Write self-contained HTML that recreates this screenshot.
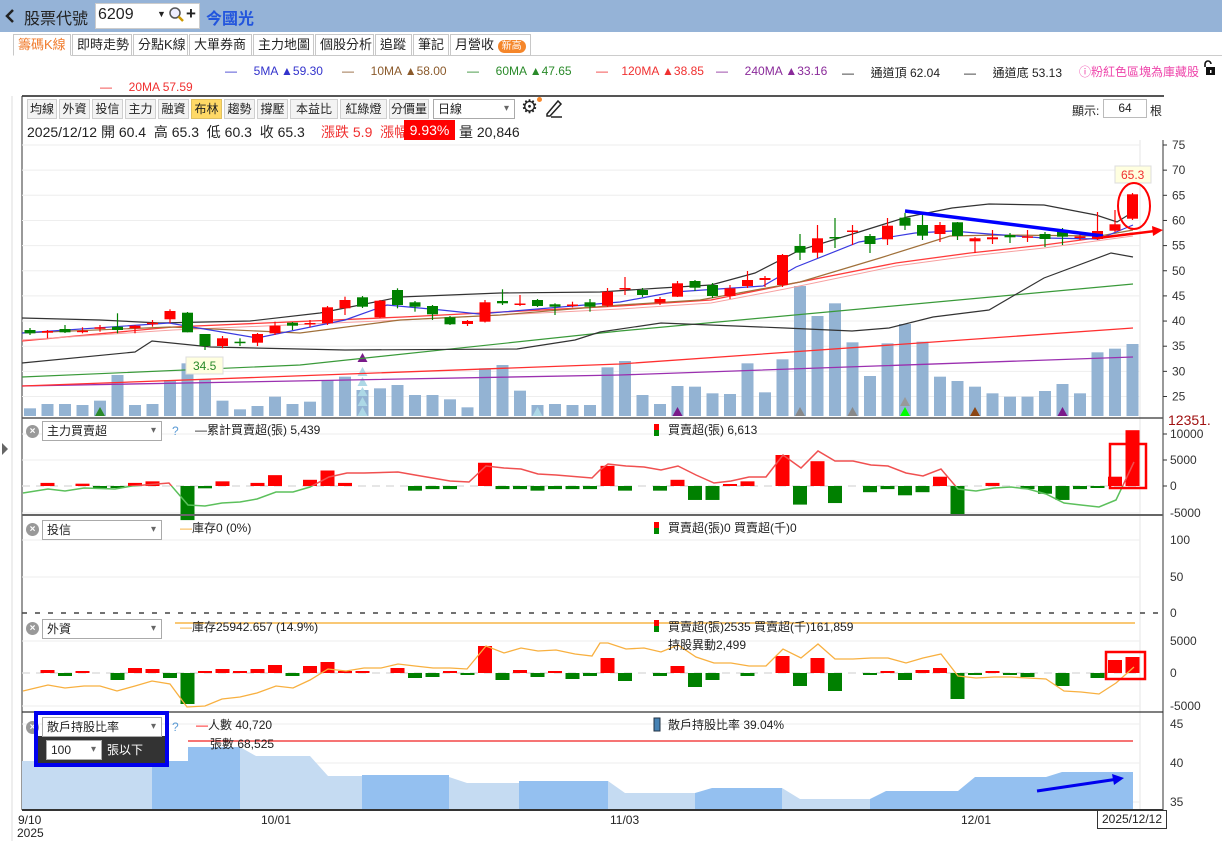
<!DOCTYPE html>
<html><head><meta charset="utf-8">
<style>
*{margin:0;padding:0;box-sizing:border-box}
body{width:1222px;height:841px;overflow:hidden;background:#fff;font-family:"Liberation Sans","Noto Sans CJK TC",sans-serif;font-size:12px;color:#222;position:relative}
.a{position:absolute;white-space:nowrap}
.hdr{left:0;top:0;width:1222px;height:32px;background:#95b3d7}
.tab{top:34px;height:22px;border:1px solid #c8c8c8;background:#fff;font-size:13px;line-height:20px;padding:0 4px;color:#222}
.tb{top:99px;height:20px;border:1px solid #cfcfcf;background:#f3f3f3;font-size:12px;line-height:18px;text-align:center}
.sel{height:20px;border:1px solid #aaa;background:#fff;font-size:12px;line-height:18px;padding-left:4px}
.sel:after{content:"▾";position:absolute;right:5px;top:0;font-size:10px;color:#666}
.xc{width:13px;height:13px;border-radius:50%;background:#999;color:#fff;font-size:10px;line-height:13px;text-align:center;font-weight:bold}
</style></head><body>
<div class="a hdr"></div>
<svg class="a" style="left:4px;top:8px" width="12" height="16"><path d="M9 2 L3 8 L9 14" fill="none" stroke="#222" stroke-width="2.5"/></svg>
<div class="a" style="left:24px;top:5px;font-size:16px;color:#222">股票代號</div>
<div class="a" style="left:95px;top:3px;width:105px;height:26px;background:#fff;border:1px solid #ccc"></div>
<div class="a" style="left:98px;top:6px;font-size:16px">6209</div>
<div class="a" style="left:157px;top:9px;font-size:9px">▼</div>
<svg class="a" style="left:168px;top:6px" width="18" height="18"><circle cx="7" cy="7" r="5" fill="#eef" stroke="#555" stroke-width="1.5"/><line x1="10.5" y1="10.5" x2="15" y2="15" stroke="#c90" stroke-width="2.5"/></svg>
<div class="a" style="left:186px;top:4px;font-size:17px;font-weight:bold">+</div>
<div class="a" style="left:206px;top:5px;font-size:16px;font-weight:bold;color:#2255dd">今國光</div>

<div class="a" style="left:70px;top:55px;width:1152px;height:1px;background:#ccc"></div>
<div class="a tab" style="left:13px;width:58px;color:#f07a2a;border-bottom-color:#fff">籌碼K線</div>
<div class="a tab" style="left:72px;width:60px">即時走勢</div>
<div class="a tab" style="left:133px;width:55px">分點K線</div>
<div class="a tab" style="left:189px;width:63px">大單券商</div>
<div class="a tab" style="left:253px;width:61px">主力地圖</div>
<div class="a tab" style="left:315px;width:59px">個股分析</div>
<div class="a tab" style="left:375px;width:37px">追蹤</div>
<div class="a tab" style="left:413px;width:36px">筆記</div>
<div class="a tab" style="left:450px;width:81px">月營收 <span style="background:#f5862a;color:#fff;border-radius:8px;font-size:10px;padding:1px 4px">新高</span></div>

<div class="a" style="left:225px;top:64px;color:#3333cc">—&nbsp;&nbsp;&nbsp;&nbsp;&nbsp;5MA ▲59.30</div>
<div class="a" style="left:342px;top:64px;color:#8b5a2b">—&nbsp;&nbsp;&nbsp;&nbsp;&nbsp;10MA ▲58.00</div>
<div class="a" style="left:467px;top:64px;color:#2a8a2a">—&nbsp;&nbsp;&nbsp;&nbsp;&nbsp;60MA ▲47.65</div>
<div class="a" style="left:596px;top:64px;color:#f03030">—&nbsp;&nbsp;&nbsp;&nbsp;120MA ▲38.85</div>
<div class="a" style="left:716px;top:64px;color:#8a2a9a">—&nbsp;&nbsp;&nbsp;&nbsp;&nbsp;240MA ▲33.16</div>
<div class="a" style="left:842px;top:64px;color:#222">—&nbsp;&nbsp;&nbsp;&nbsp;&nbsp;通道頂 62.04</div>
<div class="a" style="left:964px;top:64px;color:#222">—&nbsp;&nbsp;&nbsp;&nbsp;&nbsp;通道底 53.13</div>
<div class="a" style="left:1079px;top:63px;color:#ee44aa">ⓘ粉紅色區塊為庫藏股</div>
<svg class="a" style="left:1202px;top:60px" width="14" height="16"><path d="M3 7 V4 a3 3 0 0 1 6 0" fill="none" stroke="#111" stroke-width="1.6"/><rect x="4" y="7" width="9" height="8" fill="#111"/><rect x="8" y="10" width="1.5" height="3" fill="#fff"/></svg>
<div class="a" style="left:100px;top:80px;color:#f03030">—&nbsp;&nbsp;&nbsp;&nbsp;&nbsp;20MA 57.59</div>

<svg class="a" style="left:0;top:0" width="1222" height="841" id="ch"></svg>

<div class="a tb" style="left:27px;width:30px">均線</div>
<div class="a tb" style="left:59px;width:31px">外資</div>
<div class="a tb" style="left:92px;width:31px">投信</div>
<div class="a tb" style="left:125px;width:31px">主力</div>
<div class="a tb" style="left:158px;width:31px">融資</div>
<div class="a tb" style="left:191px;width:31px;background:#ffd966;border-color:#e0c060">布林</div>
<div class="a tb" style="left:224px;width:31px">趨勢</div>
<div class="a tb" style="left:257px;width:31px">撐壓</div>
<div class="a tb" style="left:290px;width:48px">本益比</div>
<div class="a tb" style="left:340px;width:47px">紅綠燈</div>
<div class="a tb" style="left:389px;width:40px">分價量</div>
<div class="a sel" style="left:433px;top:99px;width:82px">日線</div>
<div class="a" style="left:521px;top:96px;font-size:19px">⚙</div>
<div class="a" style="left:537px;top:97px;width:5px;height:5px;border-radius:50%;background:#f5862a"></div>
<svg class="a" style="left:544px;top:97px" width="20" height="22"><path d="M3 17 L14 4 L17 7 L6 19 L3 19 Z" fill="none" stroke="#222" stroke-width="1.5"/><line x1="7" y1="20" x2="18" y2="20" stroke="#222" stroke-width="1.5"/></svg>
<div class="a" style="left:1072px;top:102px">顯示:</div>
<div class="a" style="left:1103px;top:99px;width:44px;height:19px;border:1px solid #bbb;text-align:center;line-height:17px">64</div>
<div class="a" style="left:1150px;top:102px">根</div>

<div class="a" style="left:27px;top:122px;font-size:14px">2025/12/12 開 60.4 &nbsp;高 65.3 &nbsp;低 60.3 &nbsp;收 65.3</div>
<div class="a" style="left:321px;top:122px;font-size:14px;color:#f03030">漲跌 5.9 &nbsp;漲幅</div>
<div class="a" style="left:404px;top:120px;width:51px;height:20px;background:#f00;color:#fff;font-size:14px;line-height:20px;text-align:center">9.93%</div>
<div class="a" style="left:459px;top:122px;font-size:14px">量 20,846</div>

<!-- panel controls -->
<div class="a xc" style="left:26px;top:425px">×</div>
<div class="a sel" style="left:42px;top:421px;width:120px">主力買賣超</div>
<div class="a" style="left:172px;top:424px;color:#5b9bd5">?</div>
<div class="a" style="left:195px;top:421px">—累計買賣超(張) 5,439</div>
<div class="a" style="left:668px;top:421px">買賣超(張) 6,613</div>

<div class="a xc" style="left:26px;top:523px">×</div>
<div class="a sel" style="left:42px;top:520px;width:120px">投信</div>
<div class="a" style="left:180px;top:519px"><span style="color:#f5a623">—</span>庫存0 (0%)</div>
<div class="a" style="left:668px;top:519px">買賣超(張)0 買賣超(千)0</div>

<div class="a xc" style="left:26px;top:622px">×</div>
<div class="a sel" style="left:42px;top:619px;width:120px">外資</div>
<div class="a" style="left:180px;top:618px"><span style="color:#f5a623">—</span>庫存25942.657 (14.9%)</div>
<div class="a" style="left:668px;top:618px">買賣超(張)2535 買賣超(千)161,859</div>
<div class="a" style="left:668px;top:636px">持股異動2,499</div>

<div class="a xc" style="left:26px;top:721px">×</div>
<div class="a" style="left:34px;top:711px;width:135px;height:56px;border:4px solid #0000ee"></div>
<div class="a" style="left:38px;top:736px;width:127px;height:27px;background:#333"></div>
<div class="a sel" style="left:42px;top:717px;width:120px">散戶持股比率</div>
<div class="a sel" style="left:46px;top:740px;width:56px">100</div>
<div class="a" style="left:107px;top:741px;color:#fff">張以下</div>
<div class="a" style="left:172px;top:720px;color:#5b9bd5">?</div>
<div class="a" style="left:196px;top:716px"><span style="color:#f00">—</span>人數 40,720</div>
<div class="a" style="left:210px;top:735px">張數 68,525</div>
<div class="a" style="left:668px;top:716px">散戶持股比率 39.04%</div>

<div class="a" style="left:18px;top:813px">9/10</div>
<div class="a" style="left:17px;top:826px">2025</div>
<div class="a" style="left:261px;top:813px">10/01</div>
<div class="a" style="left:610px;top:813px">11/03</div>
<div class="a" style="left:961px;top:813px">12/01</div>
<div class="a" style="left:1097px;top:810px;width:70px;height:19px;border:1px solid #333;background:#fff;text-align:center;line-height:17px">2025/12/12</div>

<script>
const S=document.getElementById('ch');let h='';
const X=i=>30+i*17.5;
const ln=(x1,y1,x2,y2,c,w,d)=>`<line x1="${x1}" y1="${y1}" x2="${x2}" y2="${y2}" stroke="${c}" stroke-width="${w||1}" ${d?'stroke-dasharray="'+d+'"':''}/>`;
const pl=(p,c,w,ex)=>`<polyline points="${p}" fill="none" stroke="${c}" stroke-width="${w||1.2}" ${ex||''}/>`;
const tx=(x,y,t,c,s,a)=>`<text x="${x}" y="${y}" fill="${c||'#222'}" font-size="${s||12}" ${a||''}>${t}</text>`;
h+=ln(12,96,12,841,'#ddd');
h+=`<polygon points="2,443 8,449 2,455" fill="#666"/>`;
h+=ln(22,96,1164,96,'#555',2);
h+=ln(22,96,22,810,'#333');
h+=ln(1163,140,1163,810,'#333');
h+=ln(1140,140,1140,810,'#e4e4e4');
for(let p=25;p<=75;p+=5){const y=145+(75-p)*5.03;h+=ln(22,y,1140,y,'#eee');h+=ln(1163,y,1167,y,'#333');h+=tx(1172,y+4,p,'#333');}
const vA=[415,402,402,405,392,315,405,402,330,280,328,392,418,408,380,402,395,330,320,360,355,345,375,375,388,412,295,285,362,405,402,405,405];
const vB=[622,603,705,732,678,680,700,702,610,697,598,378,468,430,547,648,550,492,545,650,663,680,700,710,710,693,672,700,577,566,552];
const vt=[...vA.map(z=>270+z/3),...vB.map(z=>160+z/3)];
vt.forEach((y,i)=>{h+=`<rect x="${X(i)-6}" y="${y}" width="12" height="${416-y}" fill="#93b3d3"/>`;});
const tri=(x,y,c)=>`<polygon points="${x-5},${y} ${x+5},${y} ${x},${y-9}" fill="${c}"/>`;
h+=tri(X(4),416,'#2a8a2a');
for(let k=0;k<5;k++)h+=tri(X(19),416-k*10,'#add8e6');
h+=tri(X(19),362,'#7a1a8a');
h+=tri(X(29),416,'#add8e6');
h+=tri(X(37),416,'#7a1a8a');h+=tri(X(44),416,'#888');h+=tri(X(47),416,'#888');
h+=tri(X(50),416,'#0f0');h+=tri(X(50),406,'#999');h+=tri(X(54),416,'#8b4513');h+=tri(X(59),416,'#7a1a8a');
h+=ln(22,418,1163,418,'#555',1.5);
h+=pl('22,386 620,375 1133,357','#9b30b0',1.3);
h+=pl('22,386 620,364 1133,328','#ff3030',1.3);
h+=pl('22,377 300,365 620,331 1133,284','#3a9a3a',1.2);
h+=pl('22,363 135,352 152,341 211,347 345,350 517,349 575,340 600,332 661,323 785,328 852,331 889,328 933,317 989,310 1044,278 1111,253 1133,257','#333',1.2);
h+=pl('22,318 100,320 160,323 250,321 320,313 400,297 500,293 600,292 661,288 711,285 755,273 800,250 859,232 907,217 952,208 989,204 1044,205 1096,215 1117,222 1133,212','#333',1.2);
h+=pl('22,341 173,327 403,317 620,306 711,300 785,285 896,263 970,253 1044,245 1133,233','#ff3b3b',1.3);
h+=pl('22,340 173,330 403,320 620,309 711,303 785,289 896,266 970,256 1044,248 1133,236','#f7a0a0',1);
h+=pl('22,333 170,327 300,333 400,320 500,315 620,305 700,300 800,282 880,258 950,236 1000,235 1100,236 1133,230','#a0703a',1.2);
h+=pl('22,333 169,323 257,338 345,320 387,305 441,310 479,314 620,302 674,292 763,286 796,267 859,242 915,233 952,231 989,234 1044,238 1099,239 1133,225','#3a3ae0',1.2);
const C=[['g',330,333.3,328,335],['r',331,332.7,330,338.3],['g',329,332.3,325,333],['r',330.7,331.7,327.3,333.3],['r',327.3,328.3,325,331.7],['g',326.7,330,313.3,333.3],['r',325.7,328.3,325,333.3],['r',322.7,324.3,320,326.7],['r',311,319.3,309.3,323.3],['g',312.7,332.3,312,332.3],['g',334,346,334,350],['r',338.3,346,336,348.3],['g',341.7,342.7,338.3,346],['r',334,342.7,333,346],['r',325.7,333.3,321.7,335],['g',322.7,325.7,322,330],['r',323,324.5,320,327.3],['r',307.3,323.3,306,325],['r',300,308.3,296.7,315],['g',297.3,306.7,296,308],['r',300.7,317.3,300,318],['g',290,305,288.3,308.3],['g',302.3,306.7,301,311.7],['g',306,314.3,305,320],['g',317.3,324.3,316,325],['r',321,324,320,326],['r',302.3,321.7,300,322.5],['g',301,303.3,289.3,305],['r',303.5,305,295,306],['g',300,306,299,307],['g',304.3,306.7,303.3,315],['r',304.5,305.5,301.7,307.3],['g',302.3,306.7,299,311.7],
['r',291.7,305.7,288,307],['r',288,289.5,277,295],['g',290,295,288,297],['r',299,302.7,297,305],['r',283.3,296.7,281,297],['g',281,287.7,280,291],['g',285,296,283,298],['r',288.3,296,285,299],['r',280,286,271,288],['r',278,280,276,287],['r',255,285,254,287],['g',246,252.7,234,260],['r',238.3,252.7,225,258],['g',237,238.5,218,248],['r',230.5,232,225,245],['g',236,244,234,253],['r',225.7,239.3,218,245],['g',217.7,225.7,213,230],['g',225,235.7,213,240],['r',225,234,222,242],['g',222.3,236,222,240],['r',238.3,241.3,237,253],['r',237.3,239.3,230,244],['g',235,237.3,233,243],['r',236.3,237.7,230,242],['g',234,239,232,247],['g',231.7,236.7,228,245],['r',236.5,238,234,240],['r',231,239,212,240],['r',224.3,230.7,210,232],['r',194.3,218.7,193,220]];
C.forEach((c,i)=>{const x=X(i),col=c[0]=='r'?'#ff0000':'#008000';h+=ln(x,c[3],x,c[4],col,1.2);h+=`<rect x="${x-5.5}" y="${c[1]}" width="11" height="${Math.max(1.5,c[2]-c[1])}" fill="${col}"/>`;});
h+=`<rect x="186" y="357" width="37" height="17" fill="#ffffe0" stroke="#ddd"/>`+tx(193,370,'34.5','#2a8a2a');
h+=`<rect x="1115" y="166" width="36" height="17" fill="#ffffe0" stroke="#ddd"/>`+tx(1121,179,'65.3','#f03030');
h+=ln(905,211,1103,236,'#0000ff',3.5);
h+=ln(1098,238,1155,231,'#ff0000',2.5)+`<polygon points="1152,226 1163,230 1153,236" fill="#f00"/>`;
h+=`<ellipse cx="1134" cy="206" rx="16" ry="23" fill="none" stroke="#f00" stroke-width="2"/>`;
const Z1=486;
h+=ln(22,434,1140,434,'#eee');h+=ln(22,460,1140,460,'#eee');h+=ln(22,513,1140,513,'#eee');
h+=ln(22,Z1,1140,Z1,'#ddd',1.5,'8,6');
[['10000',438],['5000',464],['0',490],['-5000',517]].forEach(a=>{h+=tx(1170,a[1],a[0],'#333');});
h+=ln(1163,434,1167,434,'#333')+ln(1163,460,1167,460,'#333')+ln(1163,486,1167,486,'#333');
h+=tx(1168,425,'12351.','#a01010',14);
const B1=[0,2,0,1.5,-1,-1,2,3,0,-22,-1.5,3,0,2,7,0,4,10,2,0,0,0,-3,-2,-2,0,15,-2,-2,-3,-2,-2,-2,13,-3,0,-3,4,-9,-9,1,3,0,20,-12,16,-11,0,-4,-2,-6,-4,6,-19,0,2,0,-2,-5,-9,-2,-1,6,36];
const bars=(B,Z,k)=>B.forEach((v,i)=>{if(!v)return;const hh=Math.max(2,Math.abs(v)*k);h+=`<rect x="${X(i)-7}" y="${v>0?Z-hh:Z}" width="14" height="${hh}" fill="${v>0?'#ff0000':'#008000'}"/>`;});
bars(B1,Z1,1.55);
const L1=[[23,493],[48,489],[65,491],[84,488],[115,489],[132,486],[169,483],[188,505],[205,506],[222,503],[240,502],[257,499],[276,492],[293,492],[310,487],[329,477],[347,473],[364,473],[398,472],[415,475],[450,481],[469,482],[486,466],[504,468],[521,469],[538,474],[556,475],[592,478],[600,470],[608,464],[626,466],[644,467],[661,470],[678,466],[696,475],[714,483],[731,481],[749,477],[766,477],[783,455],[801,468],[818,451],[835,461],[853,461],[871,465],[888,466],[906,473],[923,476],[941,469],[958,489],[976,491],[994,488],[1011,487],[1028,489],[1046,494],[1064,503],[1081,505],[1099,507],[1116,500],[1134,462]];
const p1=L1.map(p=>p.join(',')).join(' ');
h+=`<clipPath id="ca"><rect x="0" y="400" width="1222" height="${Z1-400}"/></clipPath><clipPath id="cb"><rect x="0" y="${Z1}" width="1222" height="40"/></clipPath>`;
h+=pl(p1,'#f05050',1.5,'clip-path="url(#ca)"')+pl(p1,'#5cc05c',1.5,'clip-path="url(#cb)"');
h+=`<rect x="1110" y="444" width="36" height="44" fill="none" stroke="#f00" stroke-width="2.5"/>`;
h+=ln(22,515,1163,515,'#666',2);
h+=`<rect x="654" y="424" width="5" height="6" fill="#f00"/><rect x="654" y="430" width="5" height="6" fill="#080"/>`;
h+=ln(22,540,1140,540,'#eee');h+=ln(22,577,1140,577,'#eee');
[['100',544],['50',581],['0',617]].forEach(a=>{h+=tx(1170,a[1],a[0],'#333');});
h+=ln(22,613,1163,613,'#444',1.5,'5,8');
h+=`<rect x="654" y="522" width="5" height="6" fill="#f00"/><rect x="654" y="528" width="5" height="6" fill="#080"/>`;
const Z2=673;
h+=ln(22,641,1140,641,'#eee');h+=ln(22,706,1140,706,'#eee');
h+=ln(22,Z2,1140,Z2,'#ddd',1.5,'8,6');
[['5000',645],['0',677],['-5000',710]].forEach(a=>{h+=tx(1170,a[1],a[0],'#333');});
h+=ln(175,623,1135,623,'#f5a623',1.2);
const B2=[0,3,-3,1,0,-7,5,4,-5,-31,2,4,1,4,8,-3,7,11,2,2,0,5,-5,-4,1,-1,27,-7,3,-4,1,-6,-3,15,-8,0,-3,7,-14,-7,0,-3,0,17,-13,15,-18,0,-1,1.5,-7,3,5,-26,-1,1,-1,-4,0,-13,0,-5,13,16];
bars(B2,Z2,1);
const L2=[[23,691],[48,685],[65,688],[84,686],[100,686],[117,691],[135,686],[152,681],[170,684],[187,707],[205,706],[222,699],[240,697],[257,693],[276,686],[293,688],[310,680],[328,669],[346,671],[364,668],[381,668],[398,664],[415,666],[433,668],[450,668],[467,669],[486,646],[504,653],[521,648],[538,651],[556,650],[575,654],[592,656],[600,643],[608,643],[626,649],[644,648],[661,652],[678,645],[696,657],[714,663],[731,663],[749,666],[766,666],[783,649],[801,658],[818,644],[835,659],[853,659],[871,658],[888,658],[906,663],[923,658],[941,654],[958,676],[976,678],[994,677],[1011,677],[1028,678],[1046,679],[1064,691],[1081,692],[1099,694],[1116,683],[1134,667]];
h+=pl(L2.map(p=>p.join(',')).join(' '),'#f8b040',1.3);
h+=`<rect x="1106" y="652" width="39" height="27" fill="none" stroke="#f00" stroke-width="2.5"/>`;
h+=ln(22,712,1163,712,'#333',1.2);
h+=`<rect x="654" y="620" width="5" height="6" fill="#f00"/><rect x="654" y="626" width="5" height="6" fill="#080"/>`;
h+=ln(22,724,1140,724,'#eee');h+=ln(22,763,1140,763,'#eee');h+=ln(22,802,1140,802,'#eee');
[['45',728],['40',767],['35',806]].forEach(a=>{h+=tx(1170,a[1],a[0],'#333');});
const LB='#c5dbf2',DB='#94c0f0';
const seg=(x1,x2,pts,c)=>{h+=`<polygon points="${x1},810 ${pts} ${x2},810" fill="${c}"/>`;};
seg(22,152,'22,761 152,761',LB);
seg(152,240,'152,761 188,761 188,747 240,747',DB);
seg(240,362,'240,747 256,756 310,756 328,776 362,776',LB);
seg(362,449,'362,775 449,775',DB);
seg(449,519,'449,777 467,783 519,783',LB);
seg(519,608,'519,781 608,781',DB);
seg(608,695,'608,781 625,793 695,793',LB);
seg(695,782,'695,793 712,788 782,788',DB);
seg(782,870,'782,788 800,799 870,799',LB);
seg(870,1133,'870,799 886,791 958,791 975,777 1046,777 1062,772 1133,772',DB);
h+=ln(188,741,1133,741,'#f02020',1.2);
h+=`<rect x="654" y="718" width="6" height="13" fill="#4682b4" stroke="#234"/>`;
h+=ln(1037,791,1118,779,'#0000ee',3)+`<polygon points="1112,774 1124,778 1114,785" fill="#0000ee"/>`;
h+=ln(22,810,1163,810,'#333',2);
S.innerHTML=h;
</script>
</body></html>
